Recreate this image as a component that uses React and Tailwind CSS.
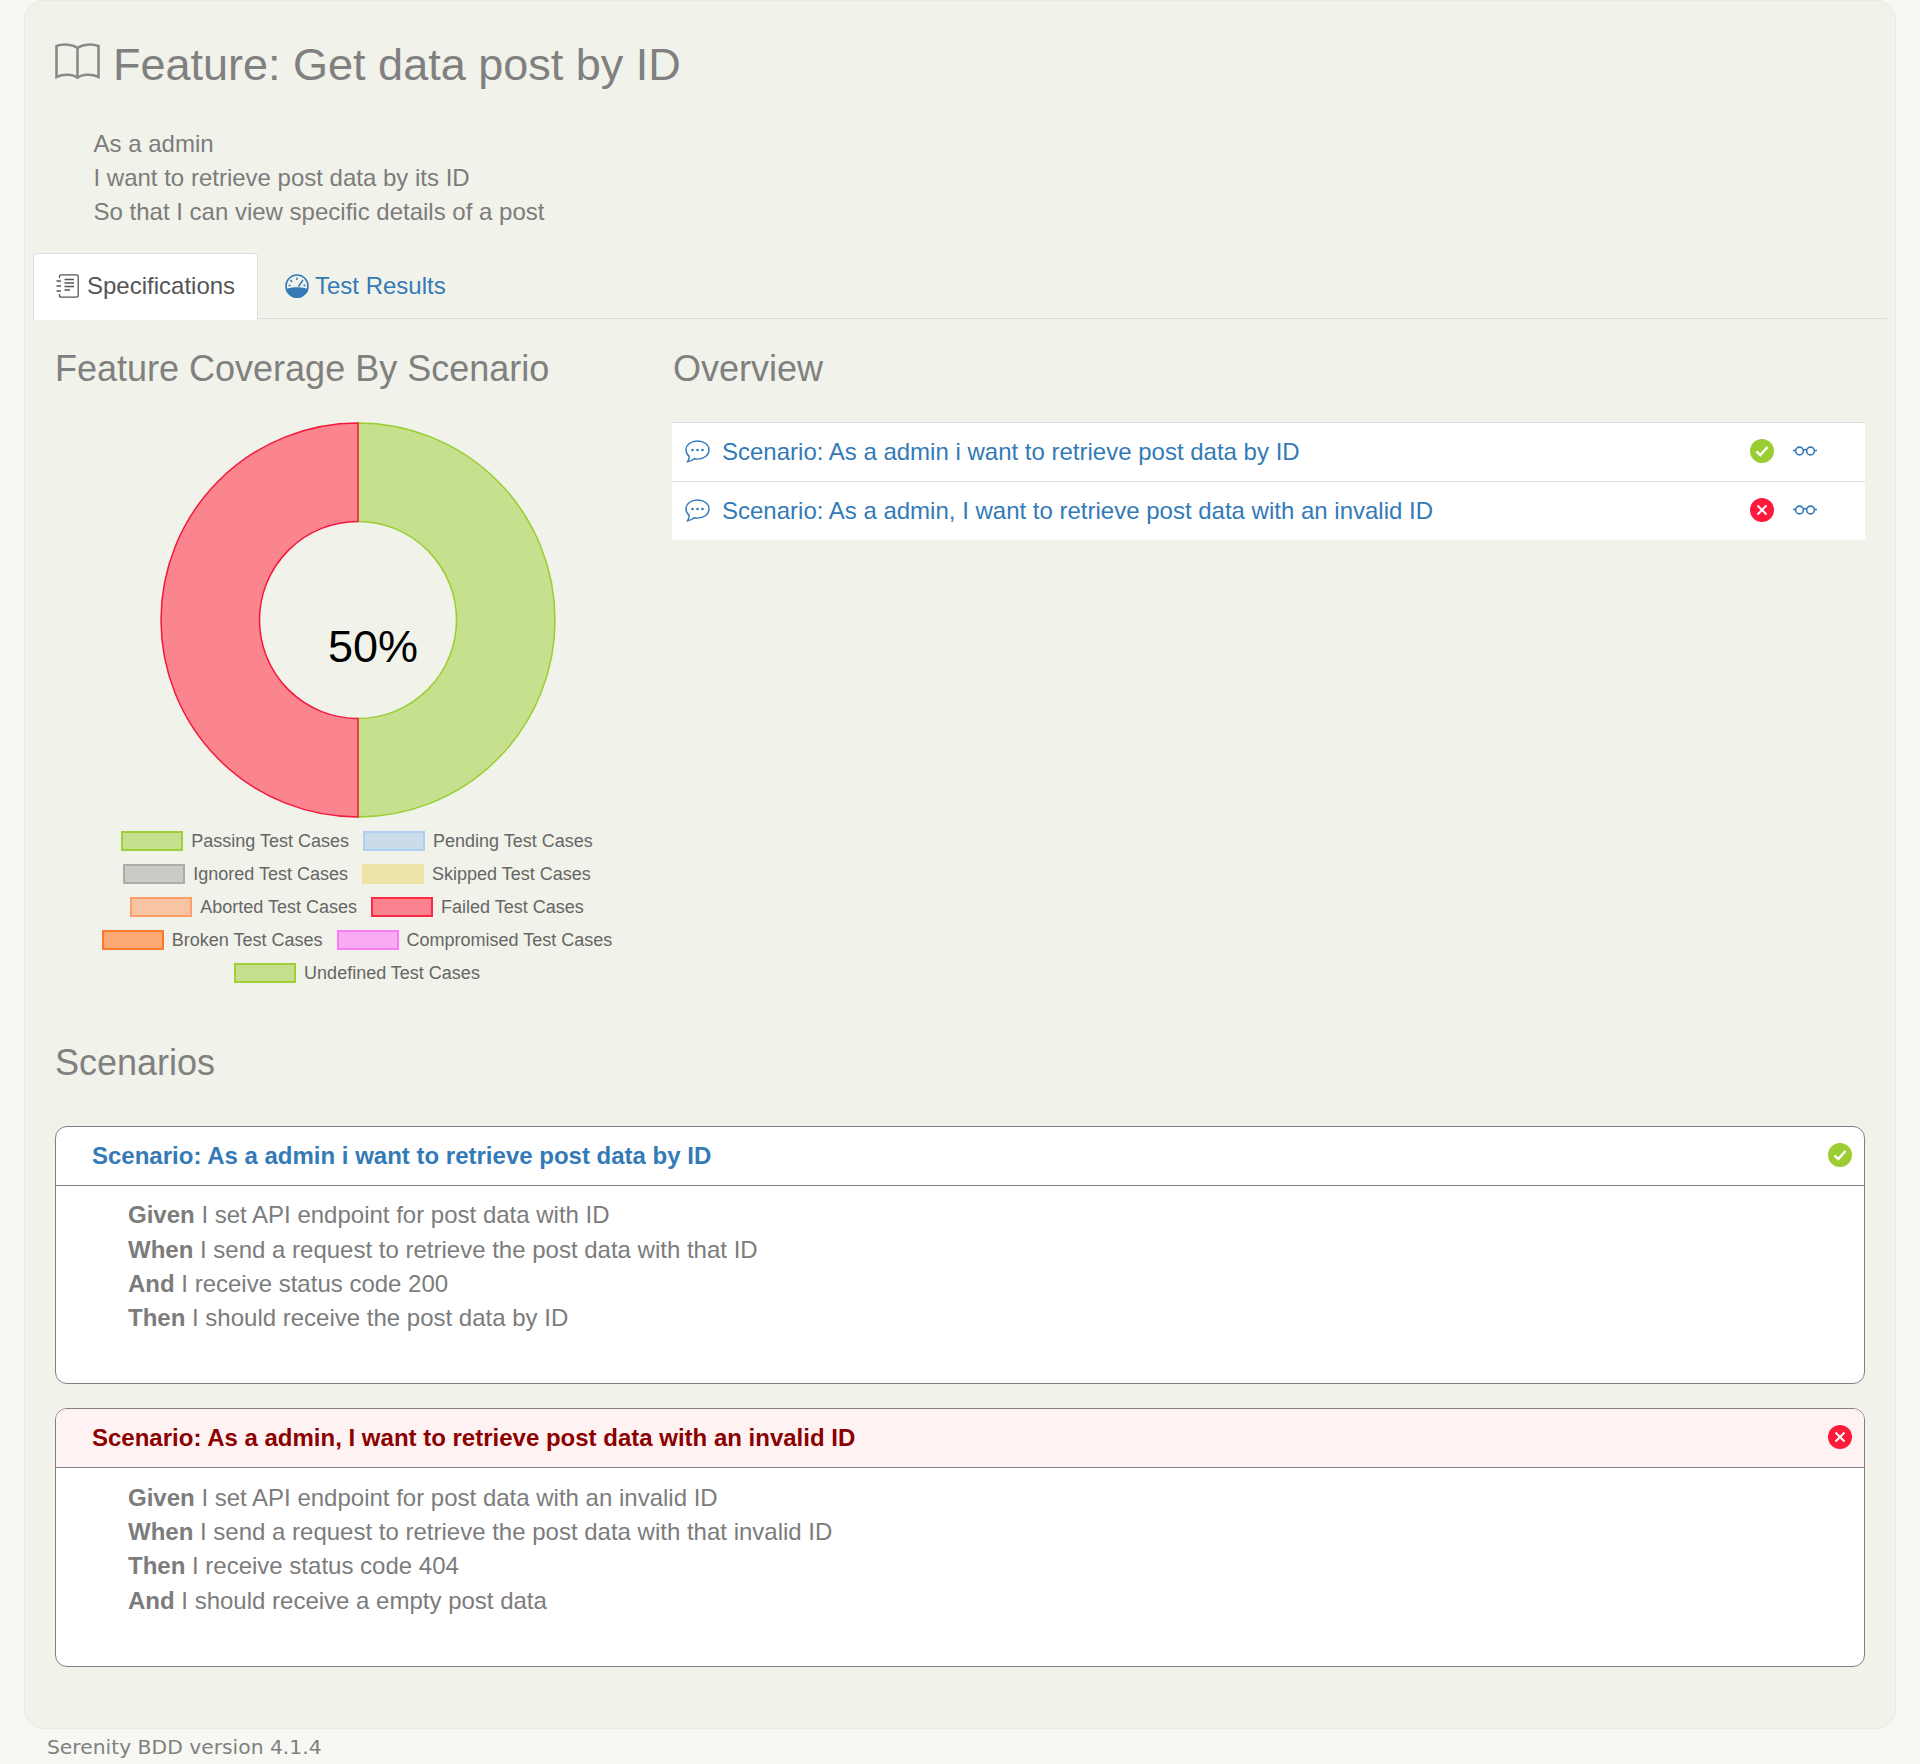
import React from 'react';

const legendRows = [
    [
        { label: 'Passing Test Cases', fill: 'bg-[#c6e08d]', line: 'border-[#9fcf3b]' },
        { label: 'Pending Test Cases', fill: 'bg-[#cadcea]', line: 'border-[#b0cff0]' },
    ],
    [
        { label: 'Ignored Test Cases', fill: 'bg-[#cbcbc6]', line: 'border-[#adadad]' },
        { label: 'Skipped Test Cases', fill: 'bg-[#ede4a8]', line: 'border-[#efe3a3]' },
    ],
    [
        { label: 'Aborted Test Cases', fill: 'bg-[#f9c4a4]', line: 'border-[#fca06a]' },
        { label: 'Failed Test Cases', fill: 'bg-[#fb838f]', line: 'border-[#fe2a45]' },
    ],
    [
        { label: 'Broken Test Cases', fill: 'bg-[#fbaa76]', line: 'border-[#fc7a2a]' },
        { label: 'Compromised Test Cases', fill: 'bg-[#f8aaf2]', line: 'border-[#fb7cf2]' },
    ],
    [{ label: 'Undefined Test Cases', fill: 'bg-[#c5df8c]', line: 'border-[#9fcf3b]' }],
];

const scenarios = [
    {
        title: 'Scenario: As a admin i want to retrieve post data by ID',
        passed: true,
        steps: [
            ['Given', 'I set API endpoint for post data with ID'],
            ['When', 'I send a request to retrieve the post data with that ID'],
            ['And', 'I receive status code 200'],
            ['Then', 'I should receive the post data by ID'],
        ],
    },
    {
        title: 'Scenario: As a admin, I want to retrieve post data with an invalid ID',
        passed: false,
        steps: [
            ['Given', 'I set API endpoint for post data with an invalid ID'],
            ['When', 'I send a request to retrieve the post data with that invalid ID'],
            ['Then', 'I receive status code 404'],
            ['And', 'I should receive a empty post data'],
        ],
    },
];

const BookIcon = () => (
    <svg width="45" height="36" viewBox="0 0 45 36" fill="none" stroke="#8a8a8a" strokeWidth="2.6" className="mb-[8px] shrink-0">
        <path d="M22.5 5C18 1.2 8 .6 1.5 3V34C8 30.8 18 31 22.5 34.8C27 31 37 30.8 43.5 34V3C37 .6 27 1.2 22.5 5V34.8" />
    </svg>
);

const NotebookIcon = () => (
    <svg width="23" height="24" viewBox="0 0 23 24" fill="none" stroke="#555" strokeWidth="1.3" className="shrink-0">
        <path d="M3.5 4V2.5Q3.5 .8 5.2 .8H20.5Q22.2 .8 22.2 2.5V21.5Q22.2 23.2 20.5 23.2H5.2Q3.5 23.2 3.5 21.5V20" />
        <path d="M8.5 5.5H18M8.5 9H18M8.5 12.5H18M8.5 16H14" />
        <path d="M.5 7H5M.5 12H5M.5 17H5" strokeWidth="1.6" />
    </svg>
);

const GaugeIcon = () => (
    <svg width="24" height="24" viewBox="0 0 24 24" fill="none" className="shrink-0">
        <circle cx="12" cy="12" r="11" stroke="#337ab7" strokeWidth="1.6" />
        <path d="M1 15.5C5 14.2 8.5 13.8 12 13.8S19 14.2 23 15.5A11.5 11.5 0 0 1 1 15.5Z" fill="#337ab7" stroke="#337ab7" />
        <path d="M12 3.5V6M5.5 6L7 8M18 6L13.5 12.5M3.5 11.5H5.5M18.5 11.5H20.5" stroke="#337ab7" strokeWidth="1.4" />
    </svg>
);

const ChatIcon = () => (
    <svg width="25" height="23" viewBox="0 0 25 23" fill="none" className="shrink-0">
        <path d="M12.5 1C6 1 1 4.8 1 10C1 12.6 2.2 14.8 4.2 16.4C4.2 18.4 3.4 20.4 2.4 21.8C5 21.6 7.6 20.4 9.2 18.8C10.3 19 11.4 19.1 12.5 19.1C19 19.1 24 15.2 24 10C24 4.8 19 1 12.5 1Z" stroke="#337ab7" strokeWidth="1.4" />
        <circle cx="7.5" cy="10" r="1.3" fill="#337ab7" />
        <circle cx="12.5" cy="10" r="1.3" fill="#337ab7" />
        <circle cx="17.5" cy="10" r="1.3" fill="#337ab7" />
    </svg>
);

const GlassesIcon = () => (
    <svg width="24" height="12" viewBox="0 0 24 12" fill="none" stroke="#337ab7" strokeWidth="1.6" className="shrink-0">
        <circle cx="6.5" cy="6" r="3.9" />
        <circle cx="17.5" cy="6" r="3.9" />
        <path d="M10.4 5.2Q12 3.8 13.6 5.2M0 5.5H2.6M21.4 5.5H24" />
    </svg>
);

const StatusIcon = ({ passed }) => (
    <svg width="24" height="24" viewBox="0 0 24 24" className="mb-[2px] shrink-0">
        <circle cx="12" cy="12" r="12" fill={passed ? '#9acd32' : '#ff1a3c'} />
        {passed ? (
            <path d="M6.5 12.5L10.3 16L17.5 8" fill="none" stroke="#fff" strokeWidth="2.4" />
        ) : (
            <path d="M7.5 7.5L16.5 16.5M16.5 7.5L7.5 16.5" fill="none" stroke="#fff" strokeWidth="2" />
        )}
    </svg>
);

const CoverageChart = () => (
    <div className="relative mx-auto h-[396px] w-[396px]">
        <svg width="396" height="396" viewBox="0 0 396 396">
            <path d="M198 1A197 197 0 0 1 198 395V296.5A98.5 98.5 0 0 0 198 99.5Z" fill="#c6e08d" stroke="#9acd32" strokeWidth="1.5" />
            <path d="M198 395A197 197 0 0 1 198 1V99.5A98.5 98.5 0 0 0 198 296.5Z" fill="#fb858f" stroke="#f6183c" strokeWidth="1.5" />
        </svg>
        <span className="absolute left-[168px] top-[199px] text-[45px] leading-[52px] text-black">50%</span>
    </div>
);

const App = () => {
    return (
        <div className="min-h-[1764px] bg-[#f7f8f3] font-['Liberation_Sans',Arial,sans-serif] text-[24px] leading-[34.3px] text-[#7c7c7c]">
            <div className="ml-[24px] h-[1729px] w-[1872px] rounded-[20px] border border-[#e8e9e1] bg-[#f1f2e9] px-[30px] pt-[32px]">
                {/* Title */}
                <div className="flex h-[64px] items-center gap-[13px]">
                    <BookIcon />
                    <h1 className="text-[45px] leading-[64px] text-[#808080]">Feature: Get data post by ID</h1>
                </div>

                {/* Narrative */}
                <div className="mt-[29.5px] pl-[38.5px]">
                    <div>As a admin</div>
                    <div>I want to retrieve post data by its ID</div>
                    <div>So that I can view specific details of a post</div>
                </div>

                {/* Tabs */}
                <div className="-ml-[22px] -mr-[22px] mt-[23.5px] flex h-[66px] border-b border-[#dddddd]">
                    <div className="-mb-[2px] flex w-[225px] items-center gap-[8px] rounded-t-[5px] border border-b-0 border-[#dddddd] bg-white pb-[2px] pl-[22px] text-[#555555]">
                        <NotebookIcon />
                        <span>Specifications</span>
                    </div>
                    <div className="flex items-center gap-[6px] pl-[27px] pt-[1px] text-[#337ab7]">
                        <GaugeIcon />
                        <span>Test Results</span>
                    </div>
                </div>

                <div className="grid grid-cols-[606px_1fr] gap-x-[12px]">
                    {/* Coverage */}
                    <div>
                        <h2 className="mt-[30px] text-[36px] leading-[40px] text-[#808080]">Feature Coverage By Scenario</h2>
                        <div className="mt-[33px]">
                            <CoverageChart />
                        </div>
                        <div className="mt-[13px] flex flex-col gap-[13px] pr-[2px]">
                            {legendRows.map((row, i) => (
                                <div key={i} className="flex h-[20px] items-center justify-center gap-[14px] text-[18px] leading-[20px] text-[#666666]">
                                    {row.map(item => (
                                        <div key={item.label} className="flex items-center gap-[8px]">
                                            <span className={`h-[20px] w-[62px] border-2 ${item.fill} ${item.line}`} />
                                            <span>{item.label}</span>
                                        </div>
                                    ))}
                                </div>
                            ))}
                        </div>
                    </div>

                    {/* Overview */}
                    <div>
                        <h2 className="mt-[30px] text-[36px] leading-[40px] text-[#808080]">Overview</h2>
                        <div className="-ml-[1px] mt-[33px]">
                            {scenarios.map(s => (
                                <div key={s.title} className="flex h-[59px] items-center border-t border-[#dddddd] bg-white pl-[13px]">
                                    <ChatIcon />
                                    <span className="ml-[12px] flex-1 text-[#337ab7]">{s.title}</span>
                                    <StatusIcon passed={s.passed} />
                                    <span className="mb-[2px] ml-[19px] mr-[48px]">
                                        <GlassesIcon />
                                    </span>
                                </div>
                            ))}
                        </div>
                    </div>
                </div>

                {/* Scenarios */}
                <h2 className="mt-[60px] text-[36px] leading-[40px] text-[#808080]">Scenarios</h2>
                <div className="mt-[43px] flex flex-col gap-[24px]">
                    {scenarios.map(s => (
                        <div key={s.title} className="h-[258.5px] overflow-hidden rounded-[12px] border border-[#808080] bg-white">
                            <div className={`flex h-[59px] items-center justify-between border-b border-[#808080] pl-[36px] pr-[12px] font-bold ${s.passed ? 'text-[#337ab7]' : 'bg-[#fff2f2] text-[#8b0000]'}`}>
                                <span>{s.title}</span>
                                <StatusIcon passed={s.passed} />
                            </div>
                            <div className="pl-[72px] pt-[12.5px]">
                                {s.steps.map(([keyword, text]) => (
                                    <div key={keyword}>
                                        <b>{keyword}</b> {text}
                                    </div>
                                ))}
                            </div>
                        </div>
                    ))}
                </div>
            </div>

            <div className="pl-[47px] pt-[4px] font-['DejaVu_Sans',sans-serif] text-[20.3px] leading-[28px] text-[#808080]">Serenity BDD version 4.1.4</div>
        </div>
    );
};

export default App;
